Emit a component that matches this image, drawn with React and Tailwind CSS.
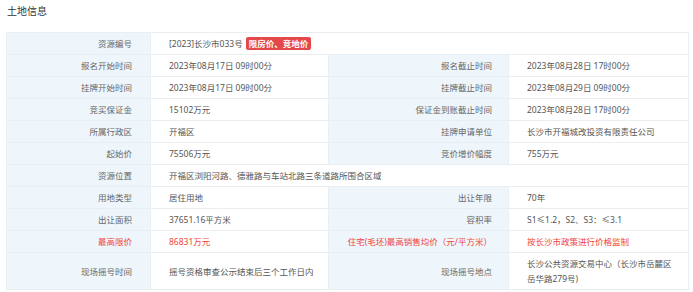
const rows = [
  { label: "资源编号", value: "[2023]长沙市033号", badge: "限房价、竞地价", span: true },
  { label: "报名开始时间", value: "2023年08月17日 09时00分", label2: "报名截止时间", value2: "2023年08月28日 17时00分" },
  { label: "挂牌开始时间", value: "2023年08月17日 09时00分", label2: "挂牌截止时间", value2: "2023年08月29日 09时00分" },
  { label: "竞买保证金", value: "15102万元", label2: "保证金到账截止时间", value2: "2023年08月28日 17时00分" },
  { label: "所属行政区", value: "开福区", label2: "挂牌申请单位", value2: "长沙市开福城改投资有限责任公司" },
  { label: "起始价", value: "75506万元", label2: "竞价增价幅度", value2: "755万元" },
  { label: "资源位置", value: "开福区浏阳河路、德雅路与车站北路三条道路所围合区域", span: true },
  { label: "用地类型", value: "居住用地", label2: "出让年限", value2: "70年" },
  { label: "出让面积", value: "37651.16平方米", label2: "容积率", value2: "S1≤1.2，S2、S3：≤3.1" },
  { label: "最高限价", value: "86831万元", label2: "住宅(毛坯)最高销售均价（元/平方米）", value2: "按长沙市政策进行价格监制", red: true },
  { label: "现场摇号时间", value: "摇号资格审查公示结束后三个工作日内", label2: "现场摇号地点", value2: "长沙公共资源交易中心（长沙市岳麓区岳华路279号)", tall: true },
];

const cell = "flex items-center border-r border-b border-[#e9eef3]";
const labelCls = `${cell} justify-end bg-[#eef6fc] text-right whitespace-nowrap`;
const valueCls = `${cell} bg-white pl-[18px]`;

export default function App() {
  return (
    <div
      className="w-[693px] h-[292px] bg-white overflow-hidden"
      style={{ fontFamily: '"Noto Sans", "Noto Sans CJK SC", sans-serif' }}
    >
      <div className="pl-[7px] pt-[4px] text-[10px] leading-[14px] text-[#333]">土地信息</div>
      <div className="ml-[6px] mt-[14px] w-[683px] border-l border-t border-[#e9eef3] text-[8.5px] leading-[15px] text-[#555]">
        {rows.map((r, i) => {
          const red = r.red ? "text-[#f0443a]" : "";
          const rowH = r.tall ? "min-h-[36px]" : "h-[22px]";
          return (
            <div key={i} className={`grid grid-cols-[144px_178px_180px_180px] ${rowH}`}>
              <div className={`${labelCls} pr-[18px] text-[#666]`}>
                <span className={red}>{r.label}</span>
              </div>
              {r.span ? (
                <div className={`${valueCls} col-span-3`}>
                  <span>{r.value}</span>
                  {r.badge && (
                    <span className="ml-[3px] inline-block rounded-[2px] bg-[#e5484a] px-[3px] text-white font-bold leading-[13px]">
                      {r.badge}
                    </span>
                  )}
                </div>
              ) : (
                <>
                  <div className={`${valueCls} ${red} pr-[8px]`}>{r.value}</div>
                  <div className={`${labelCls} pr-[16px] text-[#666]`}>
                    <span className={red}>{r.label2}</span>
                  </div>
                  <div className={`${valueCls} ${red} pr-[12px] ${r.tall ? "py-[3px]" : ""}`}>{r.value2}</div>
                </>
              )}
            </div>
          );
        })}
      </div>
    </div>
  );
}
